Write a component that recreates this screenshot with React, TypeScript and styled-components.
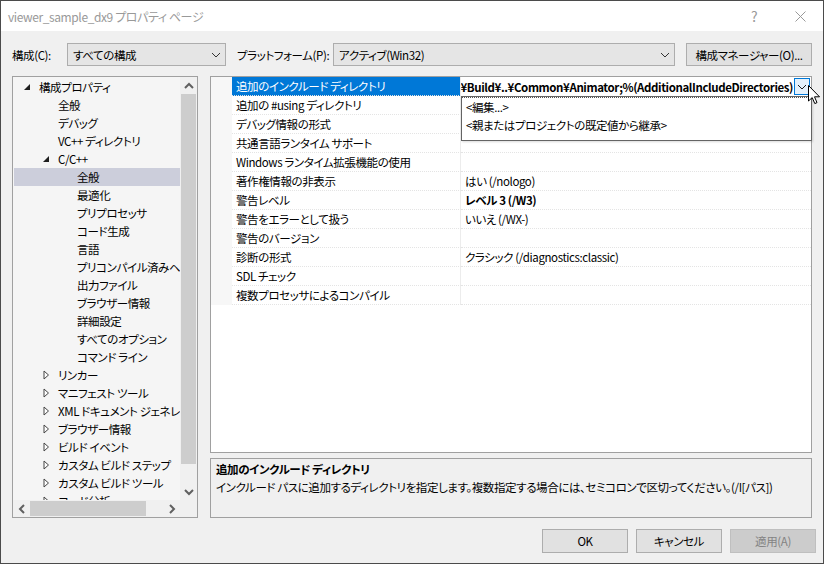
import React from 'react';
import styled, { createGlobalStyle } from 'styled-components';

const GlobalStyle = createGlobalStyle`
  html, body {
    margin: 0;
    padding: 0;
    background: #f0f0f0;
  }
  body {
    font-family: "Noto Sans CJK JP", "Noto Sans", sans-serif;
    font-size: 11.5px;
    letter-spacing: -0.4px;
    line-height: 16px;
    color: #000;
    font-feature-settings: "palt";
  }
  * {
    box-sizing: border-box;
  }
`;

const Window = styled.div`
  width: 824px;
  height: 564px;
  border: 1px solid #4b4b4b;
  background: #f0f0f0;
  display: flex;
  flex-direction: column;
  overflow: hidden;
`;

const TitleBar = styled.div`
  height: 30px;
  flex: none;
  background: #fff;
  display: flex;
  align-items: center;
  padding-left: 7px;
  color: #999;
`;

const TitleText = styled.div`
  flex: 1;
  padding-top: 1px;
  font-size: 12px;
`;

const TitleButton = styled.div`
  width: 46px;
  height: 30px;
  display: flex;
  align-items: center;
  justify-content: center;
  color: #999;
  font-size: 14px;
`;

const Body = styled.div`
  flex: 1;
  display: flex;
  flex-direction: column;
  padding: 12px 11px 0 11px;
`;

const Toolbar = styled.div`
  display: flex;
  align-items: center;
  height: 23px;
`;

const Label = styled.div<{ $w: number }>`
  width: ${p => p.$w}px;
  flex: none;
  white-space: nowrap;
`;

const Select = styled.div<{ $w: number; $mr?: number }>`
  width: ${p => p.$w}px;
  margin-right: ${p => p.$mr ?? 0}px;
  height: 23px;
  flex: none;
  background: #e5e5e5;
  border: 1px solid #adadad;
  display: flex;
  align-items: center;
  padding: 0 4px 0 5px;
  span {
    flex: 1;
  }
`;

const ToolButton = styled.div`
  margin-left: auto;
  width: 126px;
  height: 23px;
  background: #e1e1e1;
  border: 1px solid #adadad;
  display: flex;
  align-items: center;
  justify-content: center;
`;

const Main = styled.div`
  margin-top: 10px;
  height: 442px;
  display: flex;
  gap: 12px;
`;

const TreePanel = styled.div`
  width: 186px;
  flex: none;
  border: 1px solid #a0a0a0;
  background: #f5f5f5;
  display: grid;
  grid-template-columns: 1fr 17px;
  grid-template-rows: 1fr 17px;
`;

const TreeList = styled.div`
  overflow: hidden;
  padding-top: 1px;
`;

const TreeRow = styled.div<{ $level: number; $selected?: boolean }>`
  height: 18px;
  display: flex;
  align-items: center;
  white-space: nowrap;
  padding-left: ${p => 9 + p.$level * 19}px;
  margin-left: 1px;
  background: ${p => (p.$selected ? '#cccedb' : 'transparent')};
`;

const Expander = styled.div`
  width: 16px;
  flex: none;
  display: flex;
  align-items: center;
  padding-left: 1px;
`;

const VScroll = styled.div`
  background: #f0f0f0;
  display: flex;
  flex-direction: column;
  align-items: center;
`;

const HScroll = styled.div`
  background: #f0f0f0;
  display: flex;
  align-items: center;
`;

const Corner = styled.div`
  background: #f0f0f0;
`;

const ArrowBox = styled.div`
  width: 17px;
  height: 17px;
  flex: none;
  display: flex;
  align-items: center;
  justify-content: center;
`;

const VThumb = styled.div`
  width: 15px;
  height: 370px;
  background: #cdcdcd;
`;

const Track = styled.div`
  flex: 1;
`;

const HThumb = styled.div`
  width: 116px;
  height: 15px;
  background: #cdcdcd;
`;

const RightColumn = styled.div`
  flex: 1;
  display: flex;
  flex-direction: column;
  gap: 5px;
`;

const Grid = styled.div`
  position: relative;
  height: 377px;
  border: 1px solid #a0a0a0;
  background: #fff;
`;

const GridRow = styled.div`
  display: grid;
  grid-template-columns: 21px 229px 1fr;
  height: 19px;
`;

const Gutter = styled.div`
  background: #f7f7f7;
`;

const NameCell = styled.div<{ $selected?: boolean }>`
  padding-left: 4px;
  display: flex;
  align-items: center;
  white-space: nowrap;
  border-bottom: 1px dotted #e4e4e4;
  border-right: 1px solid #ececec;
  background: ${p => (p.$selected ? '#0078d7' : 'transparent')};
  color: ${p => (p.$selected ? '#fff' : '#000')};
`;

const ValueCell = styled.div<{ $bold?: boolean }>`
  padding-left: 4px;
  display: flex;
  align-items: center;
  white-space: nowrap;
  overflow: hidden;
  border-bottom: 1px dotted #e4e4e4;
  font-weight: ${p => (p.$bold ? 700 : 400)};
`;

const EditCell = styled.div`
  display: flex;
  align-items: center;
  overflow: hidden;
`;

const EditText = styled.div`
  flex: 1;
  display: flex;
  justify-content: flex-end;
  overflow: hidden;
  white-space: nowrap;
  font-weight: 700;
  padding-right: 1px;
`;

const DropButton = styled.div`
  width: 16px;
  height: 17px;
  flex: none;
  margin-right: 1px;
  border: 1px solid #0078d7;
  background: #e5f1fb;
  display: flex;
  align-items: center;
  justify-content: center;
`;

const DropList = styled.div`
  position: absolute;
  left: 250px;
  top: 19px;
  width: 351px;
  height: 45px;
  background: #fff;
  border: 1px solid #646464;
  padding-top: 0;
  box-shadow: 1px 1px 2px rgba(0, 0, 0, 0.15);
`;

const DropItem = styled.div<{ $focus?: boolean }>`
  height: 18px;
  display: flex;
  align-items: center;
  padding-left: 4px;
  border-top: 1px dotted ${p => (p.$focus ? '#555' : 'transparent')};
`;

const Cursor = styled.svg`
  position: absolute;
  left: 597px;
  top: 8px;
`;

const Description = styled.div`
  flex: 1;
  border: 1px solid #a0a0a0;
  background: #f0f0f0;
  padding: 1px 5px;
  line-height: 18px;
  white-space: nowrap;
  overflow: hidden;
`;

const DescTitle = styled.div`
  font-weight: 700;
`;

const Footer = styled.div`
  display: flex;
  justify-content: flex-end;
  gap: 8px;
  margin-top: 11px;
  margin-right: -4px;
`;

const DialogButton = styled.div<{ $disabled?: boolean }>`
  width: 86px;
  height: 24px;
  display: flex;
  align-items: center;
  justify-content: center;
  background: ${p => (p.$disabled ? '#cccccc' : '#e1e1e1')};
  border: 1px solid ${p => (p.$disabled ? '#bfbfbf' : '#adadad')};
  color: ${p => (p.$disabled ? '#838383' : '#000')};
`;

const Chevron = ({ dir = 'down', color = '#333', bold = false }: { dir?: 'down' | 'up' | 'left' | 'right'; color?: string; bold?: boolean }) => {
  const pts: Record<string, string> = {
    down: '1,3 5,7 9,3',
    up: '1,7 5,3 9,7',
    left: '7,1 3,5 7,9',
    right: '3,1 7,5 3,9',
  };
  return (
    <svg width="10" height="10" viewBox="0 0 10 10">
      <polyline points={pts[dir]} fill="none" stroke={color} strokeWidth={bold ? 2 : 1} />
    </svg>
  );
};

const Triangle = ({ open }: { open: boolean }) =>
  open ? (
    <svg width="7" height="7" viewBox="0 0 7 7">
      <polygon points="6,0 6,6 0,6" fill="#1e1e1e" />
    </svg>
  ) : (
    <svg width="7" height="10" viewBox="0 0 7 10">
      <polygon points="1,1 5.5,5 1,9" fill="#fff" stroke="#444" strokeWidth="1" />
    </svg>
  );

type TreeItem = { label: string; level: number; expander?: 'open' | 'closed'; selected?: boolean };

const treeItems: TreeItem[] = [
  { label: '構成プロパティ', level: 0, expander: 'open' },
  { label: '全般', level: 1 },
  { label: 'デバッグ', level: 1 },
  { label: 'VC++ ディレクトリ', level: 1 },
  { label: 'C/C++', level: 1, expander: 'open' },
  { label: '全般', level: 2, selected: true },
  { label: '最適化', level: 2 },
  { label: 'プリプロセッサ', level: 2 },
  { label: 'コード生成', level: 2 },
  { label: '言語', level: 2 },
  { label: 'プリコンパイル済みヘッダー', level: 2 },
  { label: '出力ファイル', level: 2 },
  { label: 'ブラウザー情報', level: 2 },
  { label: '詳細設定', level: 2 },
  { label: 'すべてのオプション', level: 2 },
  { label: 'コマンド ライン', level: 2 },
  { label: 'リンカー', level: 1, expander: 'closed' },
  { label: 'マニフェスト ツール', level: 1, expander: 'closed' },
  { label: 'XML ドキュメント ジェネレーター', level: 1, expander: 'closed' },
  { label: 'ブラウザー情報', level: 1, expander: 'closed' },
  { label: 'ビルド イベント', level: 1, expander: 'closed' },
  { label: 'カスタム ビルド ステップ', level: 1, expander: 'closed' },
  { label: 'カスタム ビルド ツール', level: 1, expander: 'closed' },
  { label: 'コード分析', level: 1, expander: 'closed' },
];

type Prop = { name: string; value?: string; bold?: boolean };

const props: Prop[] = [
  { name: '追加のインクルード ディレクトリ' },
  { name: '追加の #using ディレクトリ' },
  { name: 'デバッグ情報の形式' },
  { name: '共通言語ランタイム サポート' },
  { name: 'Windows ランタイム拡張機能の使用' },
  { name: '著作権情報の非表示', value: 'はい (/nologo)' },
  { name: '警告レベル', value: 'レベル 3 (/W3)', bold: true },
  { name: '警告をエラーとして扱う', value: 'いいえ (/WX-)' },
  { name: '警告のバージョン' },
  { name: '診断の形式', value: 'クラシック (/diagnostics:classic)' },
  { name: 'SDL チェック' },
  { name: '複数プロセッサによるコンパイル' },
];

export default function App() {
  return (
    <>
      <GlobalStyle />
      <Window>
        <TitleBar>
          <TitleText>viewer_sample_dx9 プロパティ ページ</TitleText>
          <TitleButton>?</TitleButton>
          <TitleButton>
            <svg width="11" height="11" viewBox="0 0 11 11">
              <line x1="0.5" y1="0.5" x2="10.5" y2="10.5" stroke="#999" />
              <line x1="10.5" y1="0.5" x2="0.5" y2="10.5" stroke="#999" />
            </svg>
          </TitleButton>
        </TitleBar>
        <Body>
          <Toolbar>
            <Label $w={55}>構成(C):</Label>
            <Select $w={159} $mr={11}>
              <span>すべての構成</span>
              <Chevron />
            </Select>
            <Label $w={96}>プラットフォーム(P):</Label>
            <Select $w={342}>
              <span>アクティブ(Win32)</span>
              <Chevron />
            </Select>
            <ToolButton>構成マネージャー(O)...</ToolButton>
          </Toolbar>
          <Main>
            <TreePanel>
              <TreeList>
                {treeItems.map((t, i) => (
                  <TreeRow key={i} $level={t.level} $selected={t.selected}>
                    <Expander>{t.expander && <Triangle open={t.expander === 'open'} />}</Expander>
                    {t.label}
                  </TreeRow>
                ))}
              </TreeList>
              <VScroll>
                <ArrowBox>
                  <Chevron dir="up" color="#606060" bold />
                </ArrowBox>
                <VThumb />
                <Track />
                <ArrowBox>
                  <Chevron dir="down" color="#606060" bold />
                </ArrowBox>
              </VScroll>
              <HScroll>
                <ArrowBox>
                  <Chevron dir="left" color="#606060" bold />
                </ArrowBox>
                <HThumb />
                <Track />
                <ArrowBox>
                  <Chevron dir="right" color="#606060" bold />
                </ArrowBox>
              </HScroll>
              <Corner />
            </TreePanel>
            <RightColumn>
              <Grid>
                {props.map((p, i) => (
                  <GridRow key={i}>
                    <Gutter />
                    <NameCell $selected={i === 0}>{p.name}</NameCell>
                    {i === 0 ? (
                      <EditCell>
                        <EditText>
                          <span>..¥..¥..¥Build¥..¥Common¥Animator;%(AdditionalIncludeDirectories)</span>
                        </EditText>
                        <DropButton>
                          <Chevron color="#1e1e1e" />
                        </DropButton>
                      </EditCell>
                    ) : (
                      <ValueCell $bold={p.bold}>{p.value}</ValueCell>
                    )}
                  </GridRow>
                ))}
                <DropList>
                  <DropItem $focus>&lt;編集...&gt;</DropItem>
                  <DropItem>&lt;親またはプロジェクトの既定値から継承&gt;</DropItem>
                </DropList>
                <Cursor width="13" height="20" viewBox="0 0 13 20">
                  <path d="M0.5,0.5 L0.5,16 L4.2,12.6 L6.8,18.6 L9,17.6 L6.5,11.8 L11.5,11.8 Z" fill="#fff" stroke="#000" strokeWidth="1" />
                </Cursor>
              </Grid>
              <Description>
                <DescTitle>追加のインクルード ディレクトリ</DescTitle>
                <div>インクルード パスに追加するディレクトリを指定します。複数指定する場合には、セミコロンで区切ってください。(/I[パス])</div>
              </Description>
            </RightColumn>
          </Main>
          <Footer>
            <DialogButton>OK</DialogButton>
            <DialogButton>キャンセル</DialogButton>
            <DialogButton $disabled>適用(A)</DialogButton>
          </Footer>
        </Body>
      </Window>
    </>
  );
}
